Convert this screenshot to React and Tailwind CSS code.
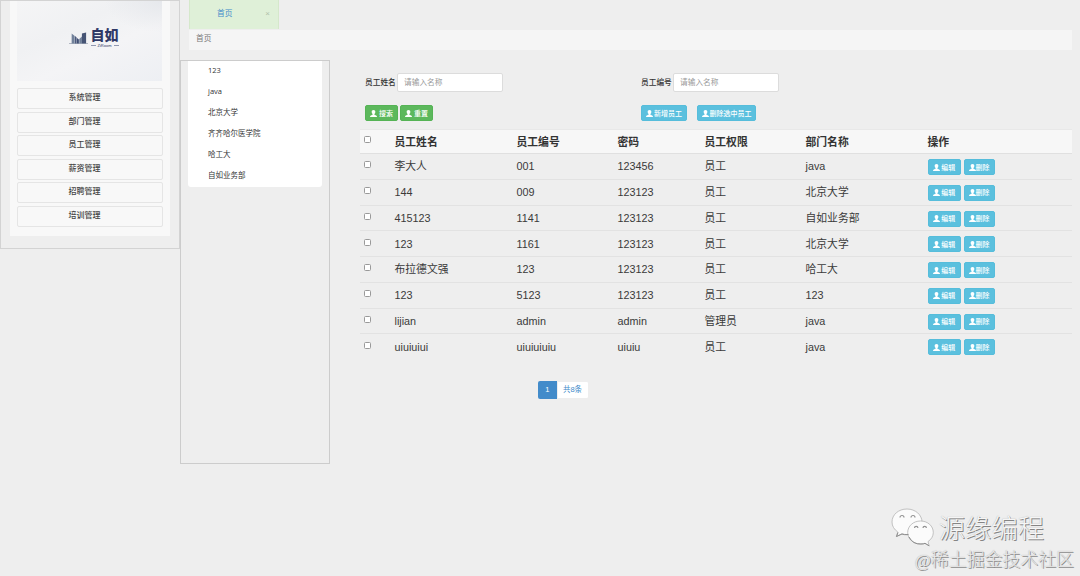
const MENU = ['系统管理', '部门管理', '员工管理', '薪资管理', '招聘管理', '培训管理'];

const DEPARTMENTS = ['123', 'java', '北京大学', '齐齐哈尔医学院', '哈工大', '自如业务部'];

const COLUMNS = ['员工姓名', '员工编号', '密码', '员工权限', '部门名称', '操作'];

const EMPLOYEES = [
  { name: '李大人', no: '001', password: '123456', role: '员工', dept: 'java' },
  { name: '144', no: '009', password: '123123', role: '员工', dept: '北京大学' },
  { name: '415123', no: '1141', password: '123123', role: '员工', dept: '自如业务部' },
  { name: '123', no: '1161', password: '123123', role: '员工', dept: '北京大学' },
  { name: '布拉德文强', no: '123', password: '123123', role: '员工', dept: '哈工大' },
  { name: '123', no: '5123', password: '123123', role: '员工', dept: '123' },
  { name: 'lijian', no: 'admin', password: 'admin', role: '管理员', dept: 'java' },
  { name: 'uiuiuiui', no: 'uiuiuiuiu', password: 'uiuiu', role: '员工', dept: 'java' },
];

const ROW_GRID = 'grid grid-cols-[34.500px_122px_101px_87px_101px_122px_1fr]';

function UserIcon() {
  return (
    <svg viewBox="0 0 16 16" className="h-[7px] w-[7px] flex-shrink-0" fill="currentColor" aria-hidden="true">
      <path d="M8 0C5.200 0 3.800 1.700 3.800 4.400c0 2 .9 3.700 2.200 4.600v1.200C5.200 11.500.5 12 .2 14.200V16h15.600v-1.800c-.3-2.200-5-2.700-5.800-4V9c1.300-.9 2.200-2.600 2.200-4.600C12.200 1.700 10.800 0 8 0z" />
    </svg>
  );
}

function Button({ className, children }) {
  return (
    <button
      className={`flex items-center justify-center rounded-[2px] border text-[7px] leading-none font-medium whitespace-nowrap text-white ${className}`}
    >
      <UserIcon />
      {children}
    </button>
  );
}

function Check({ label }) {
  return (
    <input
      type="checkbox"
      aria-label={label}
      className="block h-[7px] w-[7px] appearance-none rounded-[1.5px] border border-[#999] bg-white"
    />
  );
}

function Logo() {
  return (
    <div className="flex h-20 w-[145px] justify-center bg-[radial-gradient(ellipse_at_top_right,#e6e8ec_0%,transparent_28%),linear-gradient(155deg,#f5f5f6_0%,#f0f1f3_35%,#f4f4f6_60%,#edeff3_100%)] pt-[26px] pl-[8px]">
      <svg viewBox="0 0 50 17" className="mt-[3px] h-[17px] w-[19px] flex-shrink-0" preserveAspectRatio="none" aria-hidden="true">
        <path d="M0 13.500H50" stroke="#7b8799" strokeWidth=".8" />
        <path d="M7 3.500L15 6V13.500H7z" fill="#71819a" />
        <path d="M16 6L20 7.500V13.500H16zM21 8L26 9.500V13.500H21z" fill="#3f4e73" />
        <path d="M27 9L34 6.500V13.500H27z" fill="#71819a" />
        <path d="M34 3.500L45 2.500V13.500H34z" fill="#465475" />
      </svg>
      <div className="ml-[3px] flex w-[28px] flex-col items-center text-[#303966]">
        <span className="text-[14px] leading-[16px] font-black">自如</span>
        <span className="flex items-center gap-[2px] text-[4px] leading-[5px]">
          <i className="h-px w-[5px] bg-[#9198b0]" />
          ZiRoom
          <i className="h-px w-[5px] bg-[#9198b0]" />
        </span>
      </div>
    </div>
  );
}

function Sidebar() {
  return (
    <aside className="h-[249px] w-[180px] border border-[#d3d3d3] px-[9px]">
      <div className="h-[235px] bg-[#f8f8f8] px-[7px]">
        <Logo />
        <nav className="flex flex-col gap-[2.5px] pt-[7px]">
          {MENU.map((item) => (
            <a
              key={item}
              className="flex h-[21px] w-[146px] items-center justify-center rounded-[2px] border border-[#e5e5e5] pb-px pr-[11px] text-[8px] leading-none font-medium text-[#444]"
            >
              {item}
            </a>
          ))}
        </nav>
      </div>
    </aside>
  );
}

function DepartmentTree() {
  return (
    <section className="h-[404px] w-[150px] flex-shrink-0 border border-[#ccc] px-[7px]">
      <ul className="h-[126px] w-[134px] rounded-b-[3px] bg-white font-['Open_Sans','Noto_Sans_CJK_SC',sans-serif]">
        {DEPARTMENTS.map((name) => (
          <li key={name} className="flex h-[20.900px] items-center pb-px pl-[20px] text-[7.500px] leading-none text-[#333]">
            {name}
          </li>
        ))}
      </ul>
    </section>
  );
}

function Field({ label, className = '' }) {
  return (
    <label className={`flex items-center text-[7.700px] font-medium text-[#333] ${className}`}>
      <span className="w-[32px] whitespace-nowrap">{label}</span>
      <input
        placeholder="请输入名称"
        className="h-[19px] w-[106px] rounded-[2px] border border-[#dcdcdc] bg-white px-[6px] text-[7.700px] font-normal placeholder:text-[#999]"
      />
    </label>
  );
}

function SearchBar() {
  return (
    <div className="pl-[5px] pt-[13px]">
      <div className="flex">
        <Field label="员工姓名" className="w-[276px]" />
        <Field label="员工编号" />
      </div>
      <div className="mt-[13px] flex">
        <div className="flex w-[276px] gap-[2px]">
          <Button className="h-4 w-[33px] gap-[2px] border-[#55b355] bg-[#5cb85c]">搜索</Button>
          <Button className="h-4 w-[33px] gap-[2px] border-[#55b355] bg-[#5cb85c]">重置</Button>
        </div>
        <div className="flex gap-[10px]">
          <Button className="h-4 w-[46px] gap-px border-[#56bddb] bg-[#5bc0de]">新增员工</Button>
          <Button className="h-4 w-[59px] gap-px border-[#56bddb] bg-[#5bc0de]">删除选中员工</Button>
        </div>
      </div>
    </div>
  );
}

function EmployeeTable() {
  return (
    <div className="mt-2 text-[10.800px] leading-none text-[#3a3a3a]">
      <div className={`${ROW_GRID} h-[25px] items-center border-y border-t-[#e8e8e8] border-b-[#e0e0e0] bg-[#f7f7f7] font-bold text-[#333]`}>
        <span className="pb-1 pl-[4px]">
          <Check label="全选" />
        </span>
        {COLUMNS.map((col) => (
          <span key={col} className="pt-px">{col}</span>
        ))}
      </div>
      {EMPLOYEES.map((row, i) => (
        <div
          key={i}
          className={`${ROW_GRID} h-[25.750px] items-center border-b border-[#e2e2e2] last:border-transparent`}
        >
          <span className="pb-[3px] pl-[4px]">
            <Check label={row.name} />
          </span>
          <span className="pt-px">{row.name}</span>
          <span className="pt-px">{row.no}</span>
          <span className="pt-px">{row.password}</span>
          <span className="pt-px">{row.role}</span>
          <span className="pt-px">{row.dept}</span>
          <span className="flex gap-[3px] pt-[1.500px]">
            <Button className="h-4 w-[33px] gap-[1.500px] border-[#56bddb] bg-[#5bc0de]">编辑</Button>
            <Button className="h-4 w-[31px] border-[#56bddb] bg-[#5bc0de]">删除</Button>
          </span>
        </div>
      ))}
    </div>
  );
}

function Pagination() {
  return (
    <div className="mt-[21px] ml-[178px] flex h-[18px] text-[7.500px] leading-none">
      <span className="flex w-[18.500px] items-center justify-center rounded-l-[2px] bg-[#428bca] text-white">1</span>
      <span className="flex w-[32px] items-center justify-center rounded-r-[2px] border border-[#eee] bg-white text-[#428bca]">
        共8条
      </span>
    </div>
  );
}

function Watermark() {
  return (
    <div className="pointer-events-none absolute right-[6px] bottom-[5px] flex flex-col items-end">
      <div className="mr-[30px] flex items-start gap-[5px]">
        <svg viewBox="0 0 44 40" className="h-[40px] w-[44px]" aria-hidden="true">
          <g fill="#fbfbfb" stroke="#b4b4b4" strokeWidth=".8">
            <path d="M17 1C8.500 1 2 6.700 2 14c0 4.200 2.200 7.500 5.800 10L6.300 28.500l5.500-2.700c1.700.5 3.400.8 5.200.8 8.500 0 15-5.600 15-12.600S25.500 1 17 1z" />
            <path d="M30.500 13C23.300 13 17.700 18 17.700 24.500S23.300 36 30.500 36c1.500 0 3-.2 4.300-.6l4.400 2.500-1.200-4.300c3.200-2.200 5.300-5.300 5.300-9.100C43.300 18 37.700 13 30.500 13z" />
          </g>
          <path d="M8 24.500L6.500 28.500L12 26Q14 27 18.500 26.600M19 29Q23 36.500 31 36Q34 36 35 35.300L39.200 37.800" fill="none" stroke="#8c8c8c" />
          <g fill="none" stroke="#929292" strokeWidth="1.200">
            <path d="M10 9.500a2 2 0 0 1 4 0M21 9.500a2 2 0 0 1 4 0M24.500 20a1.700 1.700 0 0 1 3.400 0M33 20a1.700 1.700 0 0 1 3.400 0" />
          </g>
        </svg>
        <span className="mt-[4px] text-[26.300px] leading-[34px] font-light text-[#f6f6f6] [text-shadow:1px_1px_0_#858585,0_0_1px_#aaa]">
          源缘编程
        </span>
      </div>
      <span className="mt-px flex items-center text-[17.900px] leading-[22px] font-light text-[#e9e9e9] [text-shadow:1px_1px_0_#8c8c8c,0_0_1px_#aaa]">
        <span className="w-[16px] font-['Liberation_Serif'] text-[17.500px]">@</span>
        稀土掘金技术社区
      </span>
    </div>
  );
}

export default function App() {
  return (
    <div className="relative flex h-[576px] w-[1080px] overflow-hidden bg-[#eee] font-['Liberation_Sans','Noto_Sans_CJK_SC',sans-serif]">
      <Sidebar />
      <main className="flex flex-1 flex-col">
        <div className="ml-[9px] flex h-[29px] w-[90px] items-center justify-between border-x border-[#d5e8cb] bg-[#dff0d8] pr-[8px] pb-[2px] pl-[27px] text-[7.700px] leading-none text-[#428bca]">
          首页
          <span className="text-[8px] text-[#b0c1aa]">×</span>
        </div>
        <div className="mt-px mr-2 ml-[9px] flex h-5 items-center bg-[#f5f5f5] pb-[2px] pl-[7px] text-[7.700px] leading-none text-[#777]">
          首页
        </div>
        <div className="mt-[10px] flex">
          <DepartmentTree />
          <section className="mr-2 ml-[30px] flex-1">
            <SearchBar />
            <EmployeeTable />
            <Pagination />
          </section>
        </div>
      </main>
      <Watermark />
    </div>
  );
}
